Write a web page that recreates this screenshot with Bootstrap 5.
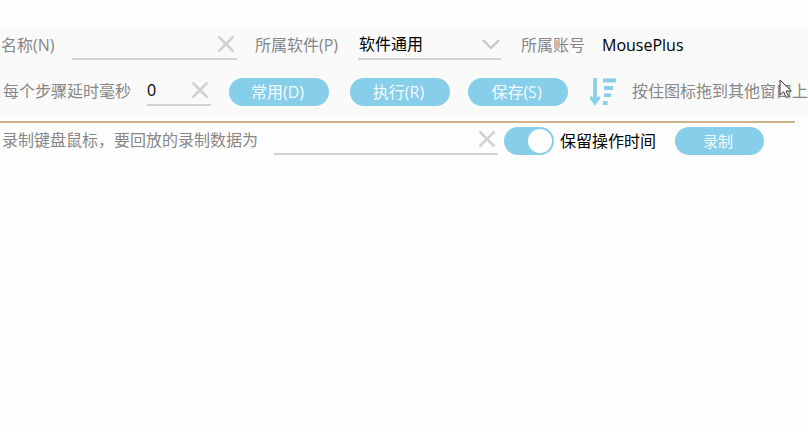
<!DOCTYPE html>
<html lang="zh-CN">
<head>
  <meta charset="UTF-8">
  <title>录制</title>
  <link href="https://cdn.jsdelivr.net/npm/bootstrap@5.3.0/dist/css/bootstrap.min.css" rel="stylesheet">
  <style>
    html, body { height: 100%; overflow: hidden; }
    body {
      background-color: #fefefe;
      font-family: "Open Sans", "Noto Sans CJK SC", sans-serif;
      font-size: 16px;
      color: #000;
    }
    .tool-band { margin-top: 27px; height: 89px; width: 808px; background-color: #fafafa; overflow: hidden; }
    .tool-row { white-space: nowrap; }
    .row-one { height: 35px; }
    .row-two { height: 44px; padding-top: 13px; }
    .row-three { height: 32px; margin-top: 2px; }
    .lbl { color: #868686; flex: none; line-height: 32px; }
    .val { flex: none; line-height: 32px; }
    .under-field {
      flex: none;
      height: 31px;
      border-bottom: 2px solid #d2d2d2;
      display: flex;
      align-items: center;
      justify-content: space-between;
      line-height: 32px;
    }
    .row-three .under-field { height: 30px; margin-bottom: 2px; justify-content: flex-end; }
    .row-three .lbl { margin-bottom: 2px; line-height: 30px; }
    .x-mark { margin-right: 2px; }
    .pill-btn {
      flex: none;
      width: 100px;
      height: 28px;
      padding: 0 3px 0 0;
      border: 0;
      border-radius: 14px;
      background-color: #87ceeb;
      color: #f4fbfe;
      font-size: 16px;
      line-height: 28px;
    }
    .row-two .pill-btn { margin-top: 3px; margin-right: 21px; }
    .row-two .pill-btn.exec-btn { margin-right: 18px; }
    .row-three .pill-btn { width: 89px; font-size: 15px; }

    /* widths of the labels and fields, row by row */
    .name-lbl { margin-left: 1px; width: 71px; }
    .name-field { width: 165px; margin-right: 18px; }
    .soft-lbl { width: 103px; }
    .soft-field { width: 143px; margin-right: 20px; padding-left: 1px; }
    .soft-arrow { margin-right: 1px; }
    .acct-lbl { width: 81px; }
    .delay-lbl { margin-left: 3px; width: 144px; }
    .delay-field { width: 64px; margin-right: 18px; }
    .sort-icon { flex: none; margin-right: 15px; }
    .rec-lbl { margin-left: 2px; width: 272px; }
    .rec-field { width: 224px; margin-right: 6px; }
    .keep-lbl { margin-left: 6px; width: 115px; }

    .divider-line { width: 795px; height: 2px; margin: 5px 0 0; background-color: #cfb18a; }
    .switch-box {
      flex: none;
      width: 50px;
      height: 28px;
      border-radius: 14px;
      background-color: #87ceeb;
      display: flex;
      justify-content: flex-end;
      align-items: center;
      padding-right: 2px;
    }
    .switch-knob { width: 24px; height: 24px; border-radius: 50%; background-color: #fff; }
    .mouse-arrow { position: absolute; left: 779px; top: 79px; }
  </style>
</head>
<body>

<div class="tool-band">
  <div class="tool-row row-one d-flex align-items-center">
    <span class="lbl name-lbl">名称(N)</span>
    <div class="under-field name-field">
      <span></span>
      <svg class="x-mark" width="18" height="18" viewBox="0 0 18 18"><path d="M1.5 1.5 16.5 16.5M16.5 1.5 1.5 16.5" stroke="#d2d2d2" stroke-width="2.6" fill="none"/></svg>
    </div>
    <span class="lbl soft-lbl">所属软件(P)</span>
    <div class="under-field soft-field">
      <span>软件通用</span>
      <svg class="soft-arrow" width="18" height="10" viewBox="0 0 18 10"><path d="M1 1 9 9 17 1" stroke="#c6c6c6" stroke-width="2.2" fill="none"/></svg>
    </div>
    <span class="lbl acct-lbl">所属账号</span>
    <span class="val">MousePlus</span>
  </div>
  <div class="tool-row row-two d-flex align-items-center">
    <span class="lbl delay-lbl">每个步骤延时毫秒</span>
    <div class="under-field delay-field">
      <span>0</span>
      <svg class="x-mark" width="18" height="18" viewBox="0 0 18 18"><path d="M1.5 1.5 16.5 16.5M16.5 1.5 1.5 16.5" stroke="#d2d2d2" stroke-width="2.6" fill="none"/></svg>
    </div>
    <button type="button" class="btn pill-btn">常用(D)</button>
    <button type="button" class="btn pill-btn exec-btn">执行(R)</button>
    <button type="button" class="btn pill-btn">保存(S)</button>
    <svg class="sort-icon" width="28" height="30" viewBox="0 0 28 30">
      <path d="M6 2V26" stroke="#87ceeb" stroke-width="3.6" fill="none"/>
      <path d="M1.5 21 6 27 10.5 21" stroke="#87ceeb" stroke-width="3" fill="none"/>
      <path d="M14 2.5H27V6.5H14ZM15 10H24V14H15ZM15 17.5H22V21H15ZM14 25H18.5V29H14Z" fill="#87ceeb"/>
    </svg>
    <span class="lbl">按住图标拖到其他窗口上</span>
  </div>
</div>
<div class="divider-line"></div>
<div class="tool-row row-three d-flex align-items-center">
  <span class="lbl rec-lbl">录制键盘鼠标，要回放的录制数据为</span>
  <div class="under-field rec-field">
    <svg class="x-mark" width="18" height="18" viewBox="0 0 18 18"><path d="M1.5 1.5 16.5 16.5M16.5 1.5 1.5 16.5" stroke="#d2d2d2" stroke-width="2.6" fill="none"/></svg>
  </div>
  <div class="switch-box"><div class="switch-knob"></div></div>
  <span class="val keep-lbl">保留操作时间</span>
  <button type="button" class="btn pill-btn">录制</button>
</div>

<svg class="mouse-arrow" width="14" height="20" viewBox="0 0 14 20">
  <path d="M1 1V16L4.6 12.8 7.2 18.6 9.6 17.5 7 12H12.4Z" fill="#fff" stroke="#333" stroke-width="1"/>
</svg>

<script src="https://cdn.jsdelivr.net/npm/bootstrap@5.3.0/dist/js/bootstrap.bundle.min.js"></script>
</body>
</html>
